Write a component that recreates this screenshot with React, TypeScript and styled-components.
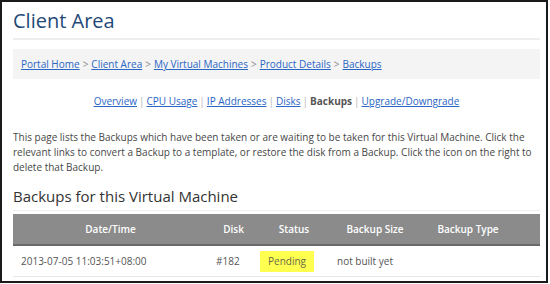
import styled, { createGlobalStyle } from "styled-components";

const Global = createGlobalStyle`
  html, body {
    margin: 0;
    padding: 0;
    background: #fff;
  }
  body {
    font-family: "Open Sans", "Noto Sans", sans-serif;
    color: #444;
  }
`;

const Frame = styled.div`
  box-sizing: border-box;
  width: 548px;
  height: 283px;
  border: 2px solid #1a1a1a;
  padding: 0 6px 0 11px;
  overflow: hidden;
`;

const Title = styled.h1`
  margin: 0;
  padding: 6px 0 4px;
  font-size: 20px;
  line-height: 26px;
  font-weight: 400;
  color: #1f4a77;
  border-bottom: 2px solid #eeeeee;
`;

const Crumbs = styled.div`
  margin-top: 9px;
  height: 30px;
  background: #f4f4f4;
  padding: 0 8px;
  display: flex;
  align-items: center;
  font-size: 10px;
`;

const Link = styled.a`
  color: #2a66c4;
  text-decoration: underline;
  cursor: pointer;
`;

const Sep = styled.span<{ $light?: boolean }>`
  color: ${(p) => (p.$light ? "#b5b5b5" : "#8a8a8a")};
  margin: 0 ${(p) => (p.$light ? 2 : 3)}px;
`;

const Tabs = styled.div`
  margin-top: 15px;
  text-align: center;
  font-size: 10px;
  line-height: 14px;
`;

const Current = styled.span`
  font-weight: 700;
  color: #555;
`;

const Intro = styled.p`
  margin: 22px 0 0;
  font-size: 10px;
  line-height: 15px;
  color: #474747;
`;

const Heading = styled.h2`
  margin: 11px 0 0;
  padding-bottom: 4px;
  font-size: 15px;
  line-height: 20px;
  font-weight: 400;
  color: #333;
  border-bottom: 1px solid #eeeeee;
`;

const Table = styled.table`
  margin-top: 3px;
  width: 527px;
  border-collapse: collapse;
  table-layout: fixed;
  font-size: 10px;
`;

const Head = styled.th<{ $w: number }>`
  width: ${(p) => p.$w}px;
  height: 30px;
  padding: 0;
  background: #8b8b8b;
  border-bottom: 2px solid #6a6a6a;
  color: #fff;
  font-weight: 600;
  text-align: center;
`;

const Cell = styled.td`
  height: 30px;
  padding: 0 0 0 8px;
  color: #555;
  border-bottom: 1px solid #e6e6e6;
  white-space: nowrap;
`;

const StatusCell = styled(Cell)`
  padding-left: 1px;
`;

const Badge = styled.span`
  display: inline-block;
  padding: 0 8px;
  line-height: 21px;
  background: #ffff4f;
  color: #6a6a4a;
`;

const crumbs = ["Portal Home", "Client Area", "My Virtual Machines", "Product Details", "Backups"];
const tabs = ["Overview", "CPU Usage", "IP Addresses", "Disks", "Backups", "Upgrade/Downgrade"];
const cols: [string, number][] = [
  ["Date/Time", 195],
  ["Disk", 51],
  ["Status", 70],
  ["Backup Size", 92],
  ["Backup Type", 94],
  ["", 25],
];

export default function App() {
  return (
    <>
      <Global />
      <Frame>
        <Title>Client Area</Title>
        <Crumbs>
          {crumbs.map((c, i) => (
            <span key={c}>
              {i > 0 && <Sep>&gt;</Sep>}
              <Link>{c}</Link>
            </span>
          ))}
        </Crumbs>
        <Tabs>
          {tabs.map((t, i) => (
            <span key={t}>
              {i > 0 && <Sep $light>|</Sep>}
              {t === "Backups" ? <Current>{t}</Current> : <Link>{t}</Link>}
            </span>
          ))}
        </Tabs>
        <Intro>
          This page lists the Backups which have been taken or are waiting to be taken for this Virtual
          Machine. Click the relevant links to convert a Backup to a template, or restore the disk from a
          Backup. Click the icon on the right to delete that Backup.
        </Intro>
        <Heading>Backups for this Virtual Machine</Heading>
        <Table>
          <thead>
            <tr>
              {cols.map(([c, w], i) => (
                <Head key={i} $w={w}>
                  {c}
                </Head>
              ))}
            </tr>
          </thead>
          <tbody>
            <tr>
              <Cell>2013-07-05 11:03:51+08:00</Cell>
              <Cell>#182</Cell>
              <StatusCell>
                <Badge>Pending</Badge>
              </StatusCell>
              <Cell>not built yet</Cell>
              <Cell></Cell>
              <Cell></Cell>
            </tr>
          </tbody>
        </Table>
      </Frame>
    </>
  );
}
